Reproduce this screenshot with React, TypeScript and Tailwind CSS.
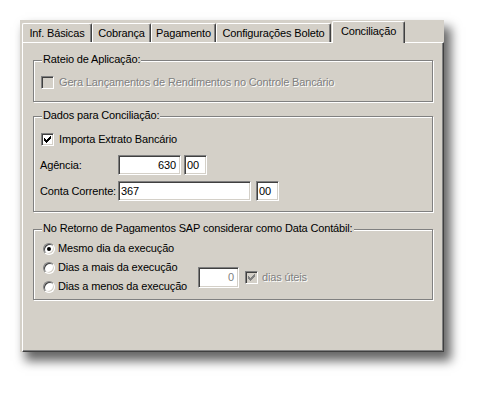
import React from "react";

const FONT = "font-['Liberation_Sans',Arial,sans-serif]";

function Check({ checked, disabled }: { checked?: boolean; disabled?: boolean }) {
  const cols = [
    [0, 2],
    [1, 3],
    [2, 4],
    [3, 3],
    [4, 2],
    [5, 1],
    [6, 0],
  ];
  return (
    <div
      className={
        "relative w-[13px] h-[13px] shrink-0 border border-t-[#808080] border-l-[#808080] border-r-white border-b-white shadow-[inset_1px_1px_0_#404040,inset_-1px_-1px_0_#d4d0c8] " +
        (disabled ? "bg-[#d4d0c8]" : "bg-white")
      }
    >
      {checked && (
        <svg width="13" height="13" viewBox="0 0 13 13" className="absolute -left-px -top-px" shapeRendering="crispEdges">
          {cols.map(([x, y]) => (
            <rect key={x} x={3 + x} y={3 + y} width="1" height="3" fill={disabled ? "#808080" : "#000"} />
          ))}
        </svg>
      )}
    </div>
  );
}

function Radio({ checked }: { checked?: boolean }) {
  return (
    <div className="w-[12px] h-[12px] shrink-0 rounded-full border border-t-[#808080] border-l-[#808080] border-r-white border-b-white bg-white shadow-[inset_1px_1px_0_#404040,inset_-1px_-1px_0_#d4d0c8] flex items-center justify-center">
      {checked && <div className="w-[4px] h-[4px] rounded-full bg-black" />}
    </div>
  );
}

function Edit({
  value,
  className,
  right,
  disabled,
}: {
  value: string;
  className: string;
  right?: boolean;
  disabled?: boolean;
}) {
  return (
    <div
      className={
        "h-[20px] flex items-center border border-t-[#808080] border-l-[#808080] border-r-white border-b-white shadow-[inset_1px_1px_0_#404040,inset_-1px_-1px_0_#d4d0c8] bg-white " +
        (right ? "justify-end pr-[4px] " : "justify-start pl-[2px] ") +
        (disabled ? "text-[#808080] " : "text-[#000000] ") +
        className
      }
    >
      {value}
    </div>
  );
}

function Group({ title, className, children }: { title: string; className: string; children?: React.ReactNode }) {
  return (
    <div className={"relative border border-[#808080] shadow-[1px_1px_0_#fff,inset_1px_1px_0_#fff] " + className}>
      <span className="absolute left-[8px] -top-[8px] bg-[#d4d0c8] px-[1px] leading-[13px] whitespace-nowrap">{title}</span>
      {children}
    </div>
  );
}

function Tab({ label, w }: { label: string; w: string }) {
  return (
    <div
      className={
        "h-[19px] flex items-center justify-center rounded-t-[2px] border-t border-l border-r border-t-white border-l-white border-r-[#404040] shadow-[inset_-1px_0_0_#808080] leading-[13px] whitespace-nowrap " +
        w
      }
    >
      {label}
    </div>
  );
}

export default function App() {
  return (
    <div className={"w-[487px] h-[394px] bg-white pl-[20px] pt-[20px] text-[11px] tracking-[-0.15px] text-black " + FONT}>
      <div className="w-[424px] h-[332px] bg-[#d4d0c8] flex flex-col pl-[2px] pt-[1px] shadow-[6px_8px_10px_1px_rgba(0,0,0,0.6)]">
        <div className="h-[21px] flex items-end">
          <Tab label="Inf. Básicas" w="w-[70px]" />
          <Tab label="Cobrança" w="w-[59px]" />
          <Tab label="Pagamento" w="w-[65px]" />
          <Tab label="Configurações Boleto" w="w-[115px]" />
          <div className="relative z-10 -mb-px h-[22px] w-[73px] ml-px flex items-start justify-center pt-[3px] rounded-t-[2px] bg-[#d4d0c8] border-t border-l border-r border-t-white border-l-white border-r-[#404040] shadow-[inset_-1px_0_0_#808080] leading-[13px] whitespace-nowrap">
            Conciliação
          </div>
        </div>
        <div className="flex-1 border border-t-white border-l-white border-r-[#404040] border-b-[#404040] shadow-[inset_-1px_-1px_0_#808080] px-[10px] flex flex-col">
          <Group title="Rateio de Aplicação:" className="mt-[17px] h-[42px] pt-[15px] pl-[7px]">
            <div className="flex items-center gap-[5px] text-[#808080] [text-shadow:1px_1px_0_#fff] leading-[13px]">
              <Check disabled />
              <span>Gera Lançamentos de Rendimentos no Controle Bancário</span>
            </div>
          </Group>

          <Group title="Dados para Conciliação:" className="mt-[14px] h-[96px] pt-[16px] pl-[6px]">
            <div className="flex items-center gap-[5px] ml-px leading-[13px]">
              <Check checked />
              <span>Importa Extrato Bancário</span>
            </div>
            <div className="flex items-center mt-[9px] h-[20px]">
              <span className="w-[78px]">Agência:</span>
              <Edit value="630" right className="w-[63px]" />
              <Edit value="00" className="w-[23px] ml-[3px]" />
            </div>
            <div className="flex items-center mt-[6px] h-[20px]">
              <span className="w-[78px] whitespace-nowrap">Conta Corrente:</span>
              <Edit value="367" className="w-[133px]" />
              <Edit value="00" className="w-[23px] ml-[5px]" />
            </div>
          </Group>

          <Group
            title="No Retorno de Pagamentos SAP considerar como Data Contábil:"
            className="mt-[17px] h-[71px] pt-[9px] pl-[9px]"
          >
            <div className="grid grid-cols-[155px_auto] grid-rows-[19px_19px_19px]">
              <div className="flex items-center gap-[3px]">
                <Radio checked />
                <span>Mesmo dia da execução</span>
              </div>
              <div />
              <div className="flex items-center gap-[3px]">
                <Radio />
                <span>Dias a mais da execução</span>
              </div>
              <div className="row-span-2 flex items-center">
                <Edit value="0" right disabled className="w-[41px] h-[21px]" />
                <div className="ml-[6px]">
                  <Check checked disabled />
                </div>
                <span className="ml-[4px] text-[#808080] [text-shadow:1px_1px_0_#fff]">dias úteis</span>
              </div>
              <div className="flex items-center gap-[3px]">
                <Radio />
                <span className="whitespace-nowrap">Dias a menos da execução</span>
              </div>
            </div>
          </Group>
        </div>
      </div>
    </div>
  );
}
